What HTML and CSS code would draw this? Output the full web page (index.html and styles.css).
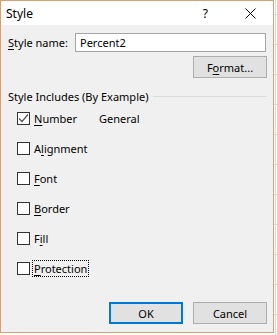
FILE: index.html
```html
<!DOCTYPE html>
<html lang="en">

<head>
    <meta charset="UTF-8">
    <title>Style</title>
    <link rel="stylesheet" href="styles.css">
</head>

<body>

    <div class="dialog">
        <div class="titlebar">
            <span class="title">Style</span>
            <span class="help">?</span>
            <svg class="close" width="11" height="11" viewBox="0 0 11 11">
                <path d="M0.5 0.5 L10.5 10.5 M10.5 0.5 L0.5 10.5" stroke="#000" stroke-width="1" fill="none" />
            </svg>
        </div>

        <div class="name-row">
            <label class="name-label"><u>S</u>tyle name:</label>
            <div class="textbox">Percent2</div>
        </div>

        <div class="format-row">
            <button class="btn">F<u>o</u>rmat...</button>
        </div>

        <div class="group-head">
            <span>Style Includes (By Example)</span>
            <div class="group-line"></div>
        </div>

        <div class="checks">
            <div class="check-row">
                <span class="box checked">
                    <svg width="11" height="11" viewBox="0 0 11 11">
                        <path d="M1 5.5 L4 8.5 L10 1.5" stroke="#555" stroke-width="1.2" fill="none" />
                    </svg>
                </span>
                <span class="check-label wide"><u>N</u>umber</span>
                <span>General</span>
            </div>
            <div class="check-row">
                <span class="box"></span>
                <span class="check-label">A<u>l</u>ignment</span>
            </div>
            <div class="check-row">
                <span class="box"></span>
                <span class="check-label"><u>F</u>ont</span>
            </div>
            <div class="check-row">
                <span class="box"></span>
                <span class="check-label"><u>B</u>order</span>
            </div>
            <div class="check-row">
                <span class="box"></span>
                <span class="check-label">F<u>i</u>ll</span>
            </div>
            <div class="check-row">
                <span class="box"></span>
                <span class="check-label focused"><u>P</u>rotection</span>
            </div>
        </div>

        <div class="footer">
            <button class="btn default">OK</button>
            <button class="btn">Cancel</button>
        </div>
    </div>

</body>

</html>
```

FILE: styles.css
```css
body {
    margin: 0;
    width: 277px;
    height: 335px;
    overflow: hidden;
    font-family: "Noto Sans", "Open Sans", sans-serif;
    font-size: 11px;
    color: #000;
    background-color: #fff;
    background-image:
        linear-gradient(to right, transparent 275px, #dadada 275px, #dadada 276px, transparent 276px),
        repeating-linear-gradient(to bottom, transparent 0, transparent 14px, #dadada 14px, #dadada 15px, transparent 15px, transparent 30px);
}

.dialog {
    box-sizing: border-box;
    width: 274px;
    height: 333px;
    background: #f0f0f0;
    border: 1px solid #dc9f6e;
    display: flex;
    flex-direction: column;
}

.titlebar {
    height: 24px;
    background: #fff;
    display: flex;
    align-items: center;
    padding-left: 5px;
    font-size: 12px;
}

.title {
    flex: 1;
}

.help {
    margin-right: 37px;
}

.close {
    margin-right: 17px;
}

.name-row {
    display: flex;
    align-items: center;
    margin-top: 8px;
    padding-left: 7px;
}

.name-label {
    width: 67px;
}

.name-label u,
.check-label u,
.btn u {
    text-underline-offset: 2px;
}

.textbox {
    box-sizing: border-box;
    width: 191px;
    height: 19px;
    background: #fff;
    border: 1px solid #a5a5a5;
    padding-left: 4px;
    line-height: 17px;
}

.format-row {
    display: flex;
    justify-content: flex-end;
    margin-top: 4px;
    padding-right: 6px;
}

.btn {
    box-sizing: border-box;
    width: 74px;
    height: 22px;
    background: #e1e1e1;
    border: 1px solid #adadad;
    font-family: inherit;
    font-size: 11px;
    padding: 0;
    color: #000;
}

.btn.default {
    border: 2px solid #0078d7;
}

.group-head {
    display: flex;
    align-items: center;
    margin-top: 11px;
    padding: 0 6px 0 7px;
    height: 14px;
}

.group-line {
    flex: 1;
    height: 1px;
    background: #dcdcdc;
    margin-left: 5px;
}

.checks {
    padding-left: 16px;
}

.check-row {
    display: flex;
    align-items: center;
    height: 30px;
}

.box {
    box-sizing: border-box;
    width: 13px;
    height: 13px;
    border: 1px solid #333;
    background: #fff;
    margin-right: 4px;
    display: flex;
    align-items: center;
    justify-content: center;
}

.check-label.wide {
    width: 65px;
}

.check-label.focused {
    outline: 1px dotted #000;
    outline-offset: 0;
    padding: 0 1px;
    margin-left: -1px;
}

.footer {
    margin-top: auto;
    display: flex;
    justify-content: flex-end;
    gap: 10px;
    padding: 0 6px 8px 0;
}
```
